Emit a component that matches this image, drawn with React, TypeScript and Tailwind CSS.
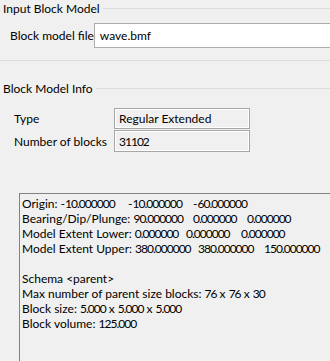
import React from "react";

function N({ s }: { s: string }) {
  const parts = s.split(/(\d[\d.]*)/);
  return (
    <>
      {parts.map((p, i) =>
        /^\d/.test(p) ? (
          <span key={i} className="tracking-[-1px]">
            {p}
          </span>
        ) : (
          <React.Fragment key={i}>{p}</React.Fragment>
        )
      )}
    </>
  );
}

type Row = { segs: [string, number][] } | { text: string };

const rows: Row[] = [
  { segs: [["Origin: -10.000000", 106], ["-10.000000", 65], ["-60.000000", 0]] },
  { segs: [["Bearing/Dip/Plunge: 90.000000", 171], ["0.000000", 54], ["0.000000", 0]] },
  { segs: [["Model Extent Lower: 0.000000", 164], ["0.000000", 55], ["0.000000", 0]] },
  { segs: [["Model Extent Upper: 380.000000", 176], ["380.000000", 66], ["150.000000", 0]] },
  { text: "" },
  { text: "Schema <parent>" },
  { text: "Max number of parent size blocks: 76 x 76 x 30" },
  { text: "Block size: 5.000 x 5.000 x 5.000" },
  { text: "Block volume: 125.000" },
];

export default function App() {
  return (
    <div
      className="w-[330px] h-[361px] overflow-hidden bg-[#f0f0f0] text-[12px] leading-[15px] text-black relative"
      style={{ fontFamily: 'Lato, "Noto Sans", sans-serif' }}
    >
      {/* Input Block Model group */}
      <div className="flex items-center h-[17px] pl-[3px]">
        <span className="whitespace-nowrap pr-[3px]">Input Block Model</span>
        <div className="flex-1 h-px bg-[#dcdcdc]" />
      </div>
      <div className="flex items-center mt-[6px] h-[25px]">
        <span className="pl-[10px] w-[99px] whitespace-nowrap">Block model file</span>
        <div className="h-[25px] w-[260px] shrink-0 border border-[#adadad] bg-white flex items-center pl-[5px]">
          wave.bmf
        </div>
      </div>
      <div className="mt-[12px] h-px bg-[#dcdcdc]" />

      {/* Block Model Info group */}
      <div className="flex items-center h-[17px] pl-[3px] mt-[19px]">
        <span className="whitespace-nowrap pr-[3px]">Block Model Info</span>
        <div className="flex-1 h-px bg-[#dcdcdc]" />
      </div>
      <div className="mt-[11px] flex flex-col gap-px">
        <div className="flex items-center h-[21px]">
          <span className="pl-[14px] w-[114px]">Type</span>
          <div className="w-[136px] h-[21px] border border-[#a6a6a6] shadow-[inset_0_0_0_1px_#ffffff] flex items-center pl-[4px]">
            Regular Extended
          </div>
        </div>
        <div className="flex items-center h-[22px]">
          <span className="pl-[14px] w-[114px] whitespace-nowrap">Number of blocks</span>
          <div className="w-[136px] h-[22px] border border-[#a6a6a6] shadow-[inset_0_0_0_1px_#ffffff] flex items-center pl-[4px]">
            <N s="31102" />
          </div>
        </div>
      </div>

      {/* Text area */}
      <div className="mt-[41px] ml-[19px] w-[340px] h-[200px] border border-[#828282] pt-[2px] pl-[2px]">
        {rows.map((r, i) =>
          "segs" in r ? (
            <div key={i} className="flex h-[15px] whitespace-pre">
              {r.segs.map(([t, w], j) => (
                <span
                  key={j}
                  className="shrink-0"
                  style={w ? { width: w } : undefined}
                >
                  <N s={t} />
                </span>
              ))}
            </div>
          ) : (
            <div key={i} className="whitespace-pre h-[15px]">
              <N s={r.text} />
            </div>
          )
        )}
      </div>
    </div>
  );
}
